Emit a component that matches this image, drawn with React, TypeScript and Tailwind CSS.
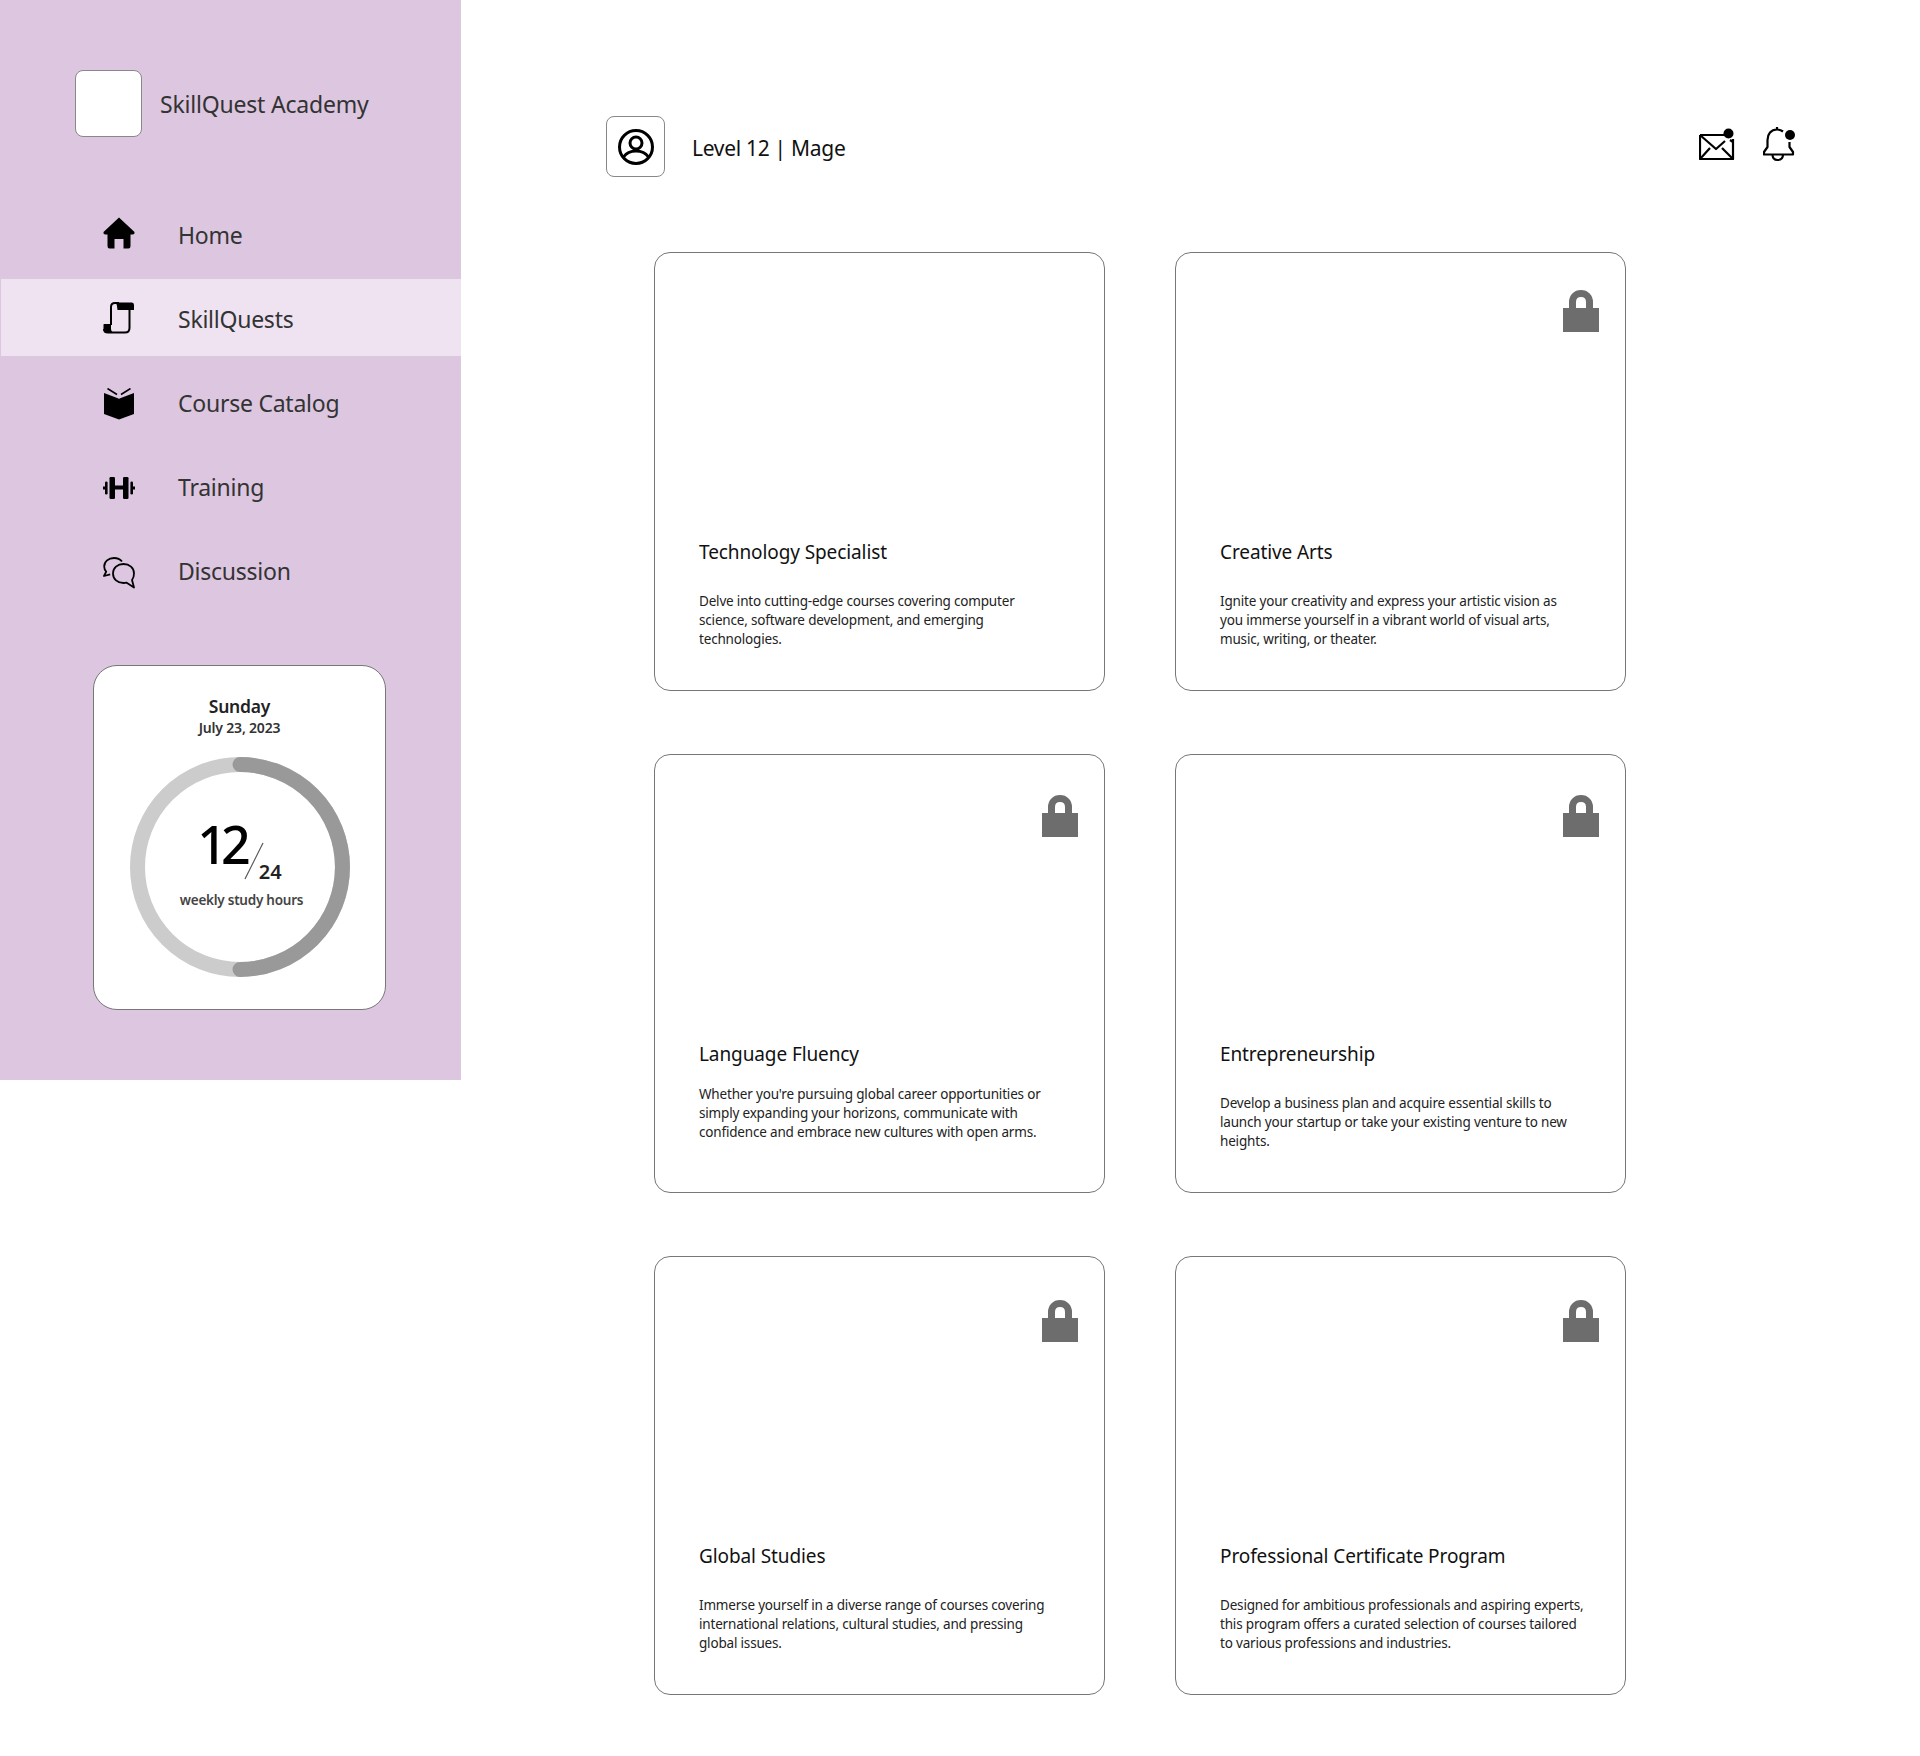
import type { ReactNode } from "react";

const HomeIcon = () => (
  <svg width="32" height="32" viewBox="0 0 32 32" fill="#000">
    <path d="M16 0.5 L31.5 15 Q32 17 30 17.5 L27.5 17.5 L27.5 29 Q27.5 31.5 25.5 31.5 L20.5 31.5 L20.5 22 L11.5 22 L11.5 31.5 L6.5 31.5 Q4.5 31.5 4.5 29 L4.5 17.5 L2 17.5 Q0 17 0.5 15 Z" />
  </svg>
);

const ScrollIcon = () => (
  <svg width="32" height="32" viewBox="0 0 32 32">
    <path d="M8 23 V5 Q8 1 12 1 H16" fill="none" stroke="#000" strokeWidth="2" />
    <path d="M13 0.5 H29 Q31 0.5 31 3 V8 H14.5 Q14 3 13 0.5 Z" fill="#000" />
    <path d="M26.5 8 V26 Q26.5 30.5 22 30.5 H5 Q1 30.5 1 27" fill="none" stroke="#000" strokeWidth="2" />
    <path d="M1 22 H8 V27 Q8 29 10 30.5 H5 Q0.5 30.5 0.5 27 V22.5 Z" fill="#000" />
  </svg>
);

const BookIcon = () => (
  <svg width="32" height="32" viewBox="0 0 32 32" fill="#000">
    <path d="M1 5 L15.5 10.5 L16 11 L16.5 10.5 L31 5 L31 26 L16 31.5 L1 26 Z" />
    <path d="M4.5 0.5 L14 6.5 M27.5 0.5 L18 6.5" stroke="#000" strokeWidth="1.6" fill="none" />
  </svg>
);

const DumbbellIcon = () => (
  <svg width="32" height="24" viewBox="0 0 32 24" fill="#000">
    <rect x="6.5" y="1" width="5.5" height="22" rx="1.2" />
    <rect x="20" y="1" width="5.5" height="22" rx="1.2" />
    <rect x="12" y="9.5" width="8" height="4" />
    <rect x="2" y="5.5" width="2.6" height="13" rx="1.3" />
    <rect x="27.4" y="5.5" width="2.6" height="13" rx="1.3" />
    <rect x="0" y="10.5" width="2" height="3" />
    <rect x="30" y="10.5" width="2" height="3" />
  </svg>
);

const ChatIcon = () => (
  <svg width="32" height="32" viewBox="0 0 32 32" fill="none" stroke="#000" strokeWidth="1.8" strokeLinejoin="round">
    <path d="M19 4.5 C17 2 14 1 11 1 C5.5 1 1.2 4.5 1.2 9.5 C1.2 11.5 2 13.3 3.2 14.6 L1 19 L7.2 17.4" />
    <path d="M20.5 7 C14.5 7 10 11 10 16.5 C10 22 14.5 26 20.5 26 C21.5 26 22.4 25.9 23.3 25.6 L31 30.5 L29 23 C30.4 21.3 31 19 31 16.5 C31 11 26.5 7 20.5 7 Z" />
  </svg>
);

const LockIcon = () => (
  <svg width="36" height="42" viewBox="0 0 36 42" fill="#6d6d6d">
    <path d="M0 18 H36 V42 H0 Z" />
    <path d="M9.5 18 V12 C9.5 7 13 3.5 18 3.5 C23 3.5 26.5 7 26.5 12 V18" fill="none" stroke="#6d6d6d" strokeWidth="7" />
  </svg>
);

const nav: { label: string; icon: ReactNode; iconClass: string }[] = [
  { label: "Home", icon: <HomeIcon />, iconClass: "-mt-[5px]" },
  { label: "SkillQuests", icon: <ScrollIcon />, iconClass: "-mt-[2px]" },
  { label: "Course Catalog", icon: <BookIcon />, iconClass: "mt-[1px]" },
  { label: "Training", icon: <DumbbellIcon />, iconClass: "mt-[1px]" },
  { label: "Discussion", icon: <ChatIcon />, iconClass: "mt-[3px]" },
];

const courses = [
  {
    title: "Technology Specialist",
    desc: ["Delve into cutting-edge courses covering computer", "science, software development, and emerging", "technologies."],
    lockClass: "",
    descClass: "mt-[26px]",
  },
  {
    title: "Creative Arts",
    desc: ["Ignite your creativity and express your artistic vision as", "you immerse yourself in a vibrant world of visual arts,", "music, writing, or theater."],
    lockClass: "top-[37px]",
    descClass: "mt-[26px]",
  },
  {
    title: "Language Fluency",
    desc: ["Whether you're pursuing global career opportunities or", "simply expanding your horizons, communicate with", "confidence and embrace new cultures with open arms."],
    lockClass: "top-[40px]",
    descClass: "mt-[17px]",
  },
  {
    title: "Entrepreneurship",
    desc: ["Develop a business plan and acquire essential skills to", "launch your startup or take your existing venture to new", "heights."],
    lockClass: "top-[40px]",
    descClass: "mt-[26px]",
  },
  {
    title: "Global Studies",
    desc: ["Immerse yourself in a diverse range of courses covering", "international relations, cultural studies, and pressing", "global issues."],
    lockClass: "top-[43px]",
    descClass: "mt-[26px]",
  },
  {
    title: "Professional Certificate Program",
    desc: ["Designed for ambitious professionals and aspiring experts,", "this program offers a curated selection of courses tailored", "to various professions and industries."],
    lockClass: "top-[43px]",
    descClass: "mt-[26px]",
  },
];

function StudyCard() {
  return (
    <div className="ml-[93px] mt-[57px] flex h-[345px] w-[293px] flex-col items-center rounded-[24px] border border-[#777] bg-white pt-[28px]">
      <div className="text-[17.5px] leading-[24px] font-semibold tracking-[-0.2px] text-[#222]">Sunday</div>
      <div className="text-[14px] leading-[19px] font-semibold tracking-[-0.2px] text-[#333]">July 23, 2023</div>
      <div className="mt-[20px] grid h-[220px] w-[220px] place-items-center">
        <svg className="col-start-1 row-start-1" width="220" height="220" viewBox="0 0 220 220" fill="none">
          <circle cx="110" cy="110" r="102.5" stroke="#cccccc" strokeWidth="15" />
          <path d="M110 7.5 A102.5 102.5 0 0 1 110 212.5" stroke="#999999" strokeWidth="15" strokeLinecap="round" />
        </svg>
        <div className="col-start-1 row-start-1 -mt-[10px] flex flex-col items-center">
          <div className="flex items-end">
            <span className="mb-[13px] text-[52px] leading-[56px] font-medium tracking-[-6px] text-black">12</span>
            <svg width="20" height="38" viewBox="0 0 20 38" className="mb-[5px] -ml-[1px]">
              <line x1="1" y1="37" x2="19" y2="1" stroke="#555" strokeWidth="1.2" />
            </svg>
            <span className="-ml-[5px] text-[20px] leading-[26px] font-semibold text-[#222]">24</span>
          </div>
          <div className="mt-[6px] pl-[4px] text-[13.5px] leading-[18px] font-semibold tracking-[-0.25px] text-[#444]">weekly study hours</div>
        </div>
      </div>
    </div>
  );
}

function CourseCard({ title, desc, lockClass, descClass }: { title: string; desc: string[]; lockClass: string; descClass: string }) {
  return (
    <div className="relative flex h-[439px] flex-col rounded-[16px] border border-[#777] bg-white pl-[44px] pt-[285px]">
      {lockClass && (
        <div className={`absolute right-[26px] ${lockClass}`}>
          <LockIcon />
        </div>
      )}
      <div className="text-[19px] leading-[28px] tracking-[-0.1px] text-[#111]">{title}</div>
      <div className={`${descClass} text-[13.5px] leading-[19px] tracking-[-0.18px] text-[#222]`}>
        {desc.map((line) => (
          <div key={line} className="whitespace-nowrap">{line}</div>
        ))}
      </div>
    </div>
  );
}

export default function App() {
  return (
    <div className="flex h-[1756px] w-[1920px] items-start bg-white font-['Noto_Sans','Open_Sans',sans-serif]">
      {/* Sidebar */}
      <aside className="h-[1080px] w-[461px] shrink-0 bg-[#dcc6e0] pt-[70px]">
        <div className="ml-[75px] flex items-center gap-[18px]">
          <div className="h-[67px] w-[67px] rounded-[8px] border border-[#888] bg-white" />
          <span className="pt-[2px] text-[23px] tracking-[-0.2px] text-[#333]">SkillQuest Academy</span>
        </div>

        <nav className="mt-[58px] flex flex-col gap-[7px]">
          {nav.map((item) => (
            <div
              key={item.label}
              className={
                item.label === "SkillQuests"
                  ? "ml-[1px] flex h-[77px] items-center gap-[43px] bg-[#efe3f2] pl-[102px] pt-[3px]"
                  : "flex h-[77px] items-center gap-[43px] pl-[103px] pt-[3px]"
              }
            >
              <span className={`flex w-[32px] justify-center ${item.iconClass}`}>{item.icon}</span>
              <span className="text-[23px] tracking-[-0.25px] text-[#333]">{item.label}</span>
            </div>
          ))}
        </nav>

        <StudyCard />
      </aside>

      {/* Main */}
      <main className="flex-1 pl-[145px] pr-[125px] pt-[116px]">
        <header className="flex items-center justify-between">
          <div className="flex items-center gap-[27px]">
            <div className="flex h-[61px] w-[59px] items-center justify-center rounded-[8px] border border-[#888] bg-white">
              <svg width="38" height="38" viewBox="0 0 38 38" fill="none" stroke="#000" strokeWidth="3">
                <circle cx="19" cy="19" r="16.5" />
                <circle cx="19" cy="15" r="6" />
                <path d="M6.5 29 C10 24 14 23 19 23 C24 23 28 24 31.5 29" />
              </svg>
            </div>
            <span className="pt-[4px] text-[21px] tracking-[-0.3px] text-[#111]">Level 12 | Mage</span>
          </div>
          <div className="-mt-[5px] flex items-center gap-[28px]">
            <svg width="36" height="32" viewBox="0 0 36 32" fill="none" stroke="#000" strokeWidth="2.2" strokeLinejoin="round">
              <path d="M1 7 H29 M34 11 V31 H1 V7" />
              <path d="M1 7 L17 21 L26 13 M34 14 L31 12" />
              <path d="M1 31 L11 20 M34 31 L23 20" />
              <circle cx="29.5" cy="5.5" r="5" fill="#000" stroke="none" />
            </svg>
            <svg width="32" height="36" viewBox="0 0 32 36" fill="none" stroke="#000" strokeWidth="2.2" strokeLinejoin="round">
              <path d="M14 1 V4 M20 5.5 C18 4 16 3.5 14 3.5 C8 3.5 4.5 8 4.5 14 V21 L1 26 V28.5 H30 V26 L26.5 21 V16" />
              <path d="M9.5 28.5 C9.5 32 11.5 34 14.5 34 C18 34 20 32 20 28.5" />
              <circle cx="27" cy="9" r="5" fill="#000" stroke="none" />
            </svg>
          </div>
        </header>

        <section className="ml-[48px] mt-[75px] grid w-[972px] grid-cols-[451px_451px] gap-x-[70px] gap-y-[63px]">
          {courses.map((c) => (
            <CourseCard key={c.title} title={c.title} desc={c.desc} lockClass={c.lockClass} descClass={c.descClass} />
          ))}
        </section>
      </main>
    </div>
  );
}
